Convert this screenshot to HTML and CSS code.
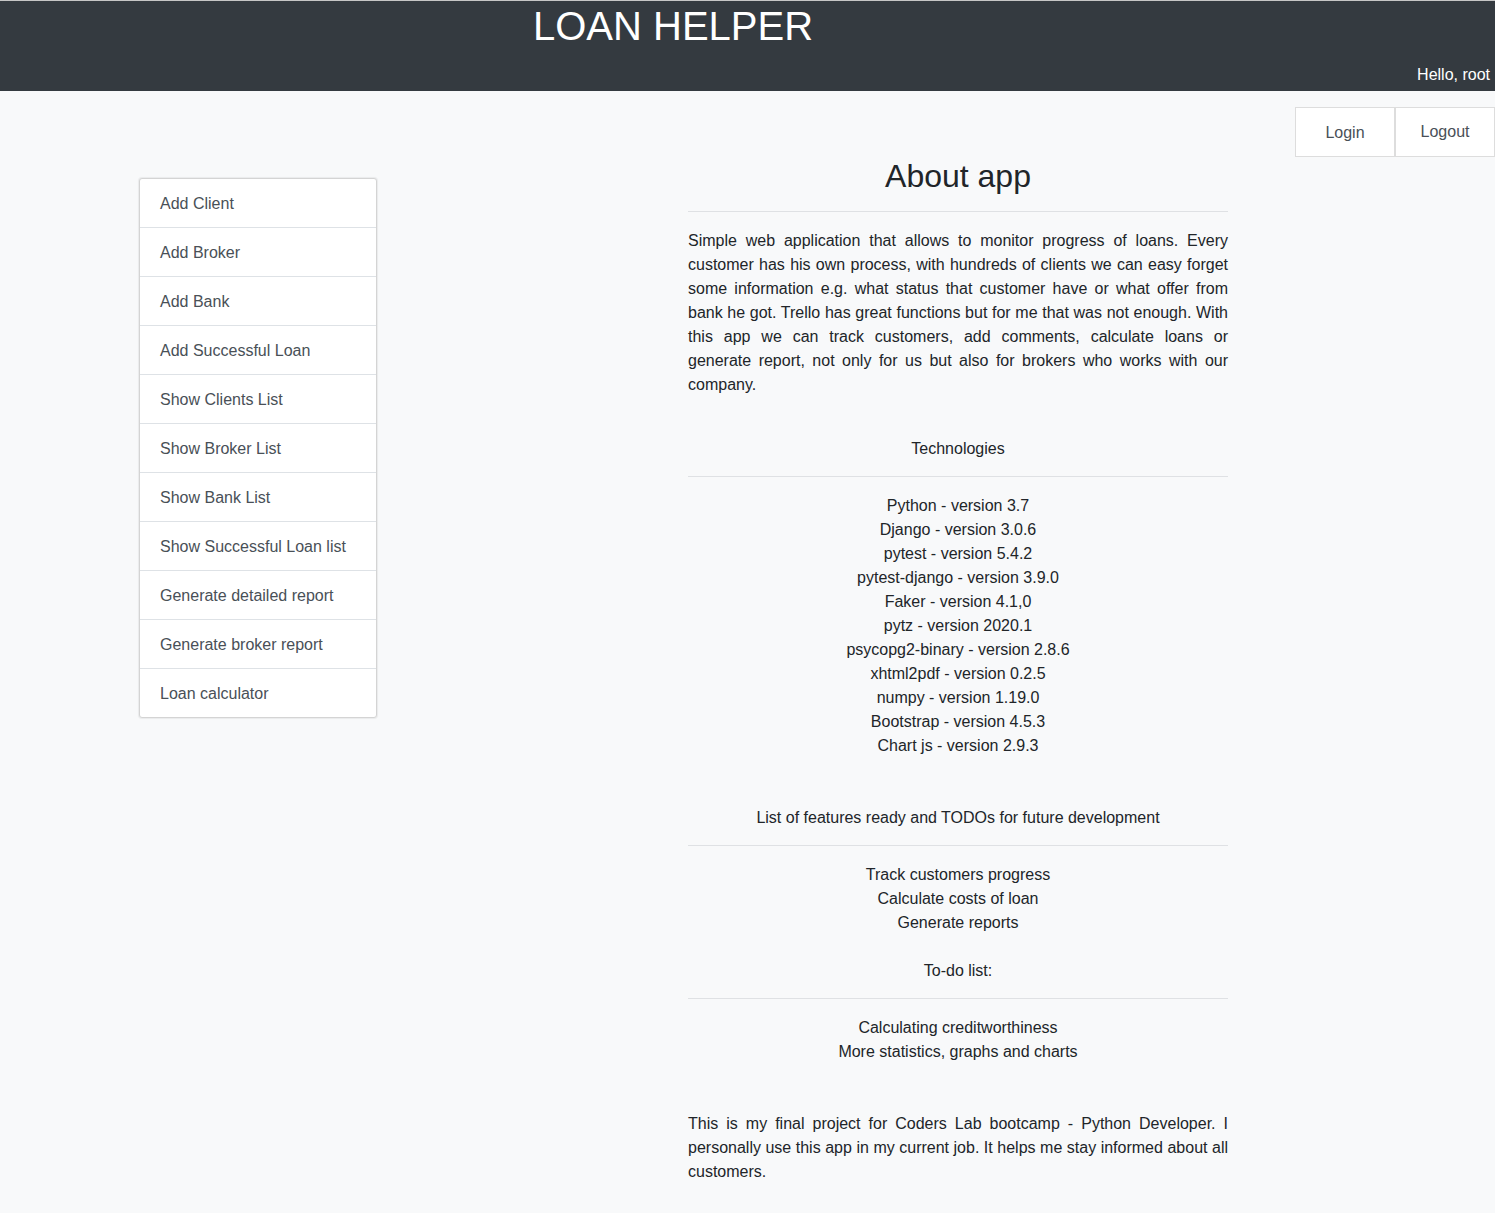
FILE: index.html
```html
<!DOCTYPE html>
<html lang="en">
<head>
<meta charset="utf-8">
<title>Loan Helper</title>
<link rel="stylesheet" href="styles.css">
</head>
<body>
<header class="topbar">
  <h1 class="brand">LOAN HELPER</h1>
  <div class="greeting">Hello, root</div>
</header>
<div class="auth">
  <a class="auth-btn" href="#">Login</a>
  <a class="auth-btn" href="#">Logout</a>
</div>
<div class="layout">
  <nav class="menu">
    <a class="menu-item" href="#">Add Client</a>
    <a class="menu-item" href="#">Add Broker</a>
    <a class="menu-item" href="#">Add Bank</a>
    <a class="menu-item" href="#">Add Successful Loan</a>
    <a class="menu-item" href="#">Show Clients List</a>
    <a class="menu-item" href="#">Show Broker List</a>
    <a class="menu-item" href="#">Show Bank List</a>
    <a class="menu-item" href="#">Show Successful Loan list</a>
    <a class="menu-item" href="#">Generate detailed report</a>
    <a class="menu-item" href="#">Generate broker report</a>
    <a class="menu-item" href="#">Loan calculator</a>
  </nav>
  <main class="about">
    <h2 class="about-title">About app</h2>
    <hr class="rule">
    <p class="text">Simple web application that allows to monitor progress of loans. Every customer has his own process, with hundreds of clients we can easy forget some information e.g. what status that customer have or what offer from bank he got. Trello has great functions but for me that was not enough. With this app we can track customers, add comments, calculate loans or generate report, not only for us but also for brokers who works with our company.</p>

    <div class="section-title gap-40">Technologies</div>
    <hr class="rule">
    <ul class="centered-list">
      <li>Python - version 3.7</li>
      <li>Django - version 3.0.6</li>
      <li>pytest - version 5.4.2</li>
      <li>pytest-django - version 3.9.0</li>
      <li>Faker - version 4.1,0</li>
      <li>pytz - version 2020.1</li>
      <li>psycopg2-binary - version 2.8.6</li>
      <li>xhtml2pdf - version 0.2.5</li>
      <li>numpy - version 1.19.0</li>
      <li>Bootstrap - version 4.5.3</li>
      <li>Chart js - version 2.9.3</li>
    </ul>

    <div class="section-title gap-48">List of features ready and TODOs for future development</div>
    <hr class="rule">
    <ul class="centered-list">
      <li>Track customers progress</li>
      <li>Calculate costs of loan</li>
      <li>Generate reports</li>
    </ul>

    <div class="section-title gap-24">To-do list:</div>
    <hr class="rule">
    <ul class="centered-list">
      <li>Calculating creditworthiness</li>
      <li>More statistics, graphs and charts</li>
    </ul>

    <p class="text gap-48">This is my final project for Coders Lab bootcamp - Python Developer. I personally use this app in my current job. It helps me stay informed about all customers.</p>
  </main>
</div>
</body>
</html>
```

FILE: styles.css
```css
* { box-sizing: border-box; }

body {
  margin: 0;
  background: #f8f9fa;
  font-family: "Liberation Sans", Arial, sans-serif;
  font-size: 16px;
  line-height: 24px;
  color: #212529;
}

.topbar {
  height: 91px;
  border-top: 1px solid #c6c6c6;
  background: #343a40;
  display: flex;
  justify-content: space-between;
  align-items: flex-end;
  padding: 0 5px 4px 533px;
}

.brand {
  align-self: flex-start;
  margin: 1px 0 0;
  font-size: 40px;
  line-height: 48px;
  font-weight: 400;
  color: #ffffff;
}

.greeting {
  color: #ffffff;
  font-size: 16px;
  line-height: 24px;
}

.auth {
  display: flex;
  justify-content: flex-end;
  margin-top: 16px;
}

.auth-btn {
  width: 100px;
  height: 50px;
  display: flex;
  align-items: center;
  justify-content: center;
  padding-top: 1px;
  background: #ffffff;
  border: 1px solid #dddddd;
  color: #495057;
  text-decoration: none;
}

.auth-btn + .auth-btn {
  padding-top: 0;
}

.layout {
  display: grid;
  grid-template-columns: 238px 540px;
  column-gap: 311px;
  padding-left: 139px;
  align-items: start;
}

.menu {
  margin-top: 21px;
  display: flex;
  flex-direction: column;
  background: #ffffff;
  border: 1px solid #d4d4d4;
  border-radius: 3px;
  box-shadow: 0 0 1px 1px rgba(0, 0, 0, 0.06);
}

.menu-item {
  display: block;
  padding: 13px 20px 11px 20px;
  height: 49px;
  color: #495057;
  text-decoration: none;
  border-bottom: 1px solid #dee2e6;
}

.menu-item:last-child {
  border-bottom: none;
  height: 48px;
}

.about {
  padding-bottom: 30px;
}

.about-title {
  margin: 0;
  height: 39px;
  font-size: 32px;
  line-height: 38px;
  font-weight: 400;
  text-align: center;
  color: #212529;
}

.rule {
  margin: 15px 0 17px;
  border: 0;
  border-top: 1px solid #dfe1e4;
}

.text {
  margin: 0;
  text-align: justify;
}

.section-title {
  text-align: center;
}

.gap-40 { margin-top: 40px; }
.gap-48 { margin-top: 48px; }
.gap-24 { margin-top: 24px; }

.centered-list {
  list-style: none;
  margin: 0;
  padding: 0;
  text-align: center;
}
```
